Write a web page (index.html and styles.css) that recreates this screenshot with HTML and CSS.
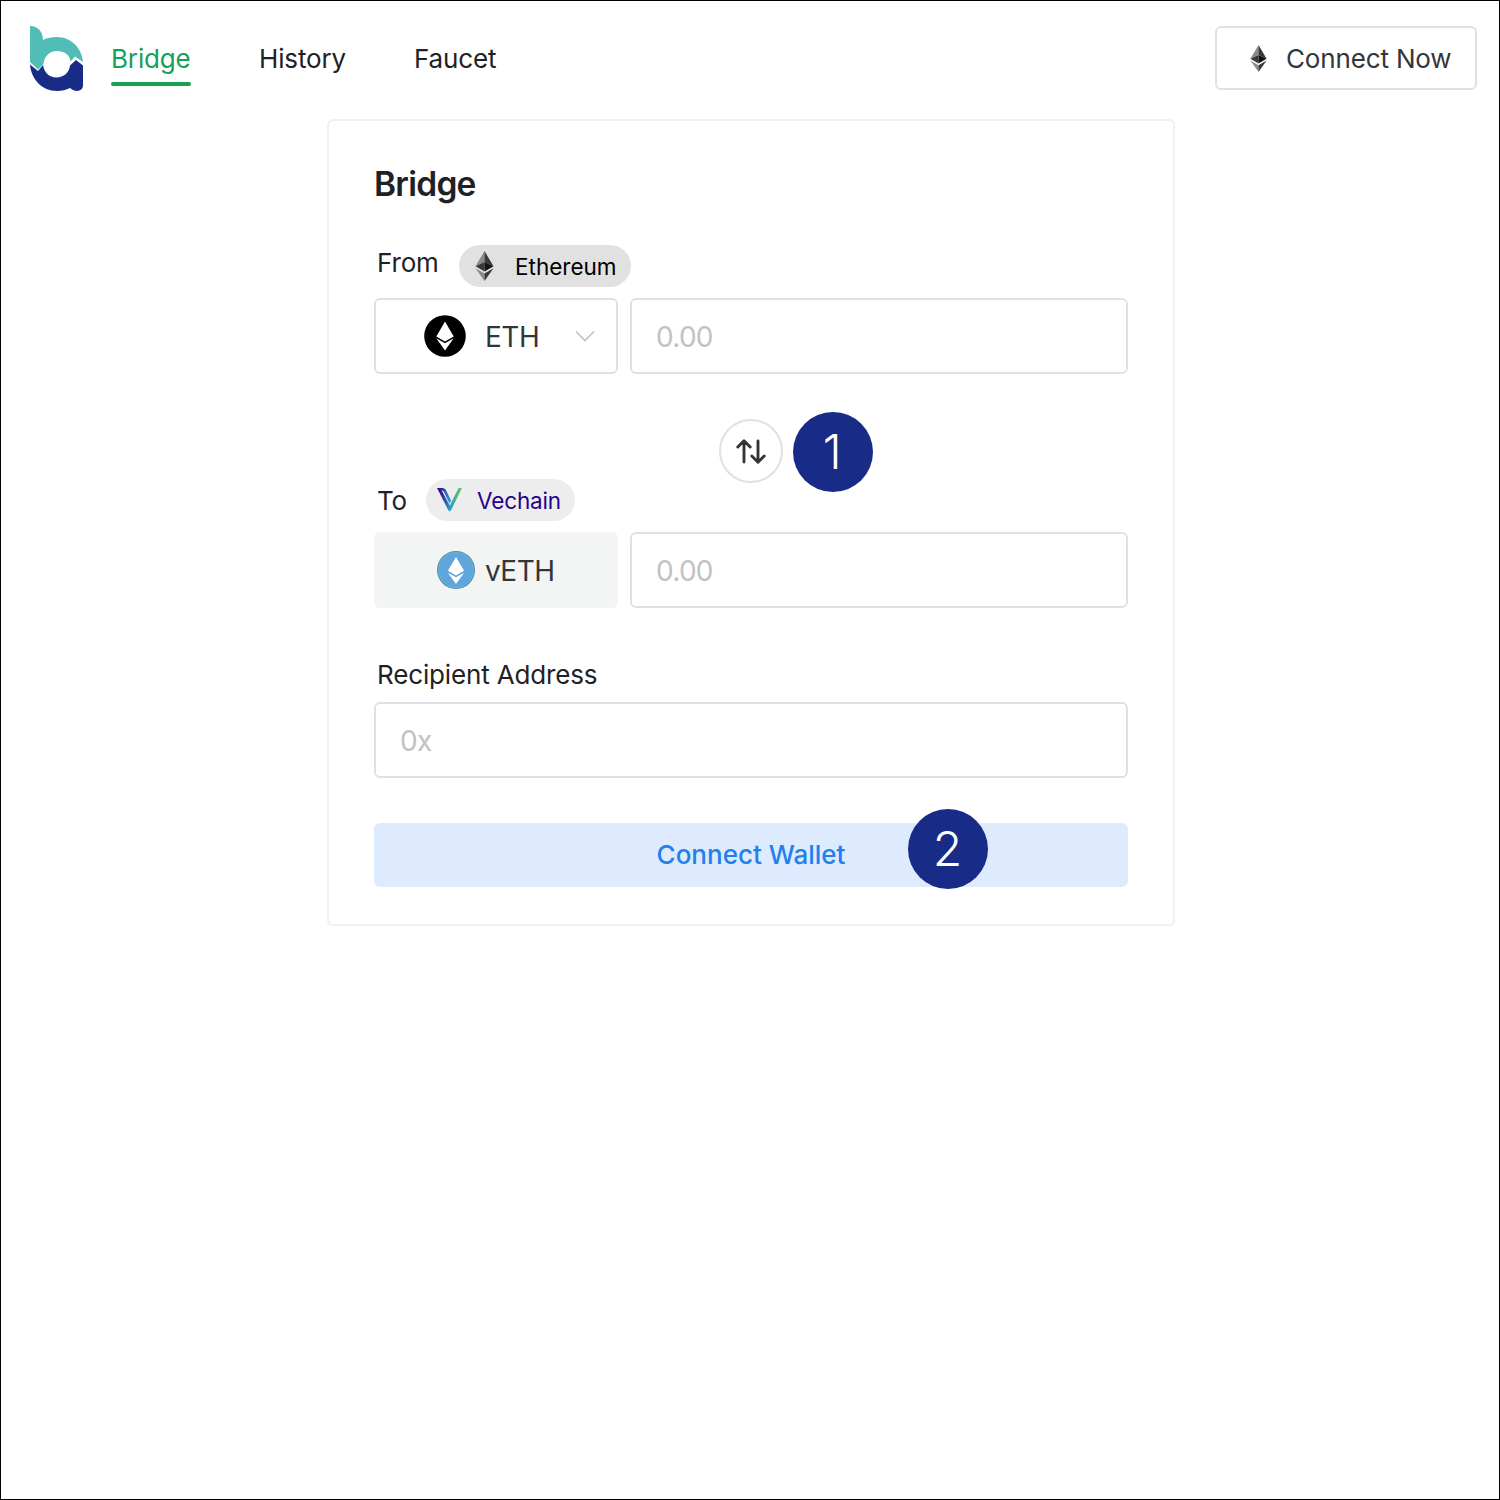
FILE: index.html
```html
<!DOCTYPE html>
<html lang="en">
<head>
<meta charset="utf-8">
<title>Bridge</title>
<link rel="stylesheet" href="styles.css">
</head>
<body>
<svg class="defs" width="0" height="0" aria-hidden="true">
  <defs>
    <linearGradient id="ve" x1="0" y1="0" x2="1" y2="0"><stop offset="0" stop-color="#2a0d94"/><stop offset=".22" stop-color="#2d2a9c"/><stop offset=".5" stop-color="#2a9bd0"/><stop offset="1" stop-color="#70c94f"/></linearGradient>
    <symbol id="eth" viewBox="0 0 18 30">
      <path fill="#8b8b8b" d="M9 0 0 15.2 9 11z"/><path fill="#393939" d="M9 0v11l9 4.2z"/>
      <path fill="#393939" d="M0 15.2 9 11v9.5z"/><path fill="#131313" d="M9 11v9.5l9-5.3z"/>
      <path fill="#8b8b8b" d="M0 17.2 9 30v-7.5z"/><path fill="#393939" d="M9 22.5V30l9-12.8z"/>
    </symbol>
    <symbol id="gem" viewBox="0 0 18 30">
      <path d="M9 0 0 15.4 9 20.6l9-5.2zM0 17.4 9 30l9-12.6-9 5.2z"/>
    </symbol>
  </defs>
</svg>
<header class="topbar">
  <svg class="logo" viewBox="0 0 54 65" width="54" height="65">
    <path fill="#52bcb7" d="M0 0C8 0 13 6 13 14c4-2.200 9-3 14-3 14 0 25 11 26 25l-8-5.500-4.500 5C40 29 34 25 27 25c-8 0-13 6-13.500 13L8 43.500 0 36z"/>
    <path fill="#182c87" d="M0 38.500 8 45l5-6c1 7 6 12.500 13.500 12.500 7 0 13-5 13.500-12l6-5.500 7 5.500V59c0 7-8 7.500-13 3-4 2-8 3-13 3C12 65 1 53 0 38.500z"/>
  </svg>
  <nav class="nav">
    <a class="nav-link active">Bridge</a>
    <a class="nav-link">History</a>
    <a class="nav-link">Faucet</a>
  </nav>
  <button class="connect-now"><svg width="17" height="27"><use href="#eth"/></svg><span>Connect Now</span></button>
</header>
<main class="card">
  <h1 class="title">Bridge</h1>
  <div class="label-row">
    <span class="label from">From</span>
    <span class="pill ethereum"><svg width="19" height="30"><use href="#eth"/></svg><span class="chain">Ethereum</span></span>
  </div>
  <div class="field-row">
    <div class="token select">
      <svg class="coin" width="42" height="42"><circle cx="21" cy="21" r="20.800"/><use href="#gem" x="12" y="6.500" width="18" height="29" fill="#fff"/></svg>
      <span class="token-name">ETH</span>
      <svg class="chevron" width="20" height="12" viewBox="0 0 20 12"><path d="m1 1.500 9 9 9-9" fill="none" stroke="#c2c2c2" stroke-width="1.600"/></svg>
    </div>
    <input class="field" placeholder="0.00">
  </div>
  <div class="switch-row">
    <button class="switch"><svg width="30" height="25" viewBox="0 0 30 25"><path d="M8 23V2M1.800 8 8 1.800 14.200 8M22 2v21M15.800 17 22 23.200 28.200 17" fill="none" stroke="#333639" stroke-width="2.900" stroke-linecap="round" stroke-linejoin="round"/></svg></button>
    <span class="badge badge-one">1</span>
  </div>
  <div class="label-row to-row">
    <span class="label to">To</span>
    <span class="pill vechain"><svg width="26" height="24" viewBox="0 0 26 24"><path fill="url(#ve)" d="M0 0h5c2 0 3.200.7 4 2.300l5.200 10.200-1.600 3.300L7.200 4.300C6.500 2.900 6 2.400 4.600 2.200L12.800 17.600 21.500 0H25L14 22.300c-.7 1.300-1.900 1.300-2.600 0z"/></svg><span class="chain">Vechain</span></span>
  </div>
  <div class="field-row">
    <div class="token fixed">
      <svg class="coin" width="38" height="38"><circle cx="19" cy="19" r="19" fill="#5488ac"/><circle cx="19" cy="19" r="18" fill="#61b8d4"/><circle cx="19" cy="19" r="16.800" fill="#5fa4dc"/><use href="#gem" x="10.750" y="6" width="16.500" height="27" fill="#fff"/></svg>
      <span class="token-name">vETH</span>
    </div>
    <input class="field" placeholder="0.00">
  </div>
  <label class="label recipient">Recipient Address</label>
  <input class="field address" placeholder="0x">
  <button class="connect-wallet"><span>Connect Wallet</span><span class="badge badge-two">2</span></button>
</main>
</body>
</html>
```

FILE: styles.css
```css
* { box-sizing: border-box; }
body { margin: 0; width: 1500px; height: 1500px; border: 1px solid #000; background: #fff; color: #1f2225; font: 26px/36px Inter, "Liberation Sans", sans-serif; letter-spacing: -.15px; overflow: hidden; }
button, input { font: inherit; letter-spacing: inherit; margin: 0; }
svg { display: block; flex: none; }
.defs { position: absolute; }
.topbar { height: 118px; padding: 25px 22px 0 29px; display: flex; align-items: flex-start; }
.nav { display: flex; margin-left: 27px; padding-top: 15px; gap: 68px; }
.nav-link { height: 45px; white-space: nowrap; }
.active { width: 80px; color: #18a058; }
.active::after { content: ""; display: block; height: 4px; border-radius: 2px; background: #18a058; margin-top: 5px; }
.connect-now { margin-left: auto; width: 262px; height: 64px; border: 2px solid #e0e0e6; border-radius: 6px; background: #fff; color: #333639; display: flex; align-items: center; padding: 1px 0 0 33px; gap: 19px; white-space: nowrap; }
.card { width: 848px; height: 807px; margin-left: 326px; border: 2px solid #efeff5; border-radius: 6px; padding: 42px 45px 0; }
.title { margin: 0; font-size: 33.5px; line-height: 42px; font-weight: 600; letter-spacing: -.75px; }
.label-row { display: flex; align-items: flex-start; margin-top: 40px; height: 53px; padding-left: 3px; }
.label { white-space: nowrap; }
.from { width: 62px; }
.to { width: 30px; padding-top: 4px; }
.pill { height: 42px; border-radius: 21px; display: flex; align-items: center; font-size: 22.5px; white-space: nowrap; }
.chain { padding-top: 2px; }
.ethereum { width: 172px; margin-left: 20px; background: #e1e1e1; color: #000; padding-left: 16px; gap: 21px; letter-spacing: 0; }
.vechain { width: 149px; margin-left: 19px; background: #ededed; color: #28008c; padding-left: 11px; gap: 14px; }
.field-row { display: flex; gap: 12px; height: 76px; }
.token { width: 244px; height: 76px; border-radius: 6px; display: flex; align-items: center; color: #333639; font-size: 28px; letter-spacing: -.5px; }
.token-name { padding-top: 1px; }
.select { border: 2px solid #e0e0e6; padding-left: 48px; }
.select .token-name { margin-left: 19px; width: 54px; }
.chevron { margin-left: 36px; }
.fixed { background: #f3f5f5; padding-left: 63px; gap: 10px; }
.field { width: 498px; height: 76px; border: 2px solid #e0e0e6; border-radius: 6px; background: #fff; padding: 1px 24px 0; font-size: 28px; letter-spacing: -.7px; outline: 0; }
.field::placeholder { color: #c2c2c2; opacity: 1; }
.switch-row { height: 105px; padding-top: 45px; display: flex; justify-content: center; position: relative; }
.switch { width: 64px; height: 64px; flex: none; padding: 0; border: 2px solid #e0e0e6; border-radius: 50%; background: #fff; display: flex; align-items: center; justify-content: center; }
.badge { position: absolute; width: 80px; height: 80px; border-radius: 50%; background: #182c87; color: #fff; display: flex; align-items: center; justify-content: center; font: 300 48px/80px Inter, sans-serif; }
.badge-one { left: 419px; top: 38px; padding-right: 2px; }
.to-row { margin-top: 0; }
.recipient { display: block; margin: 49px 0 9px 3px; }
.address { display: block; width: 754px; }
.connect-wallet { display: flex; justify-content: center; align-items: center; position: relative; width: 754px; height: 64px; margin-top: 45px; border: 0; border-radius: 6px; background: #deeafe; color: #2080f0; font-weight: 500; padding: 0; letter-spacing: 0; }
.badge-two { left: 534px; top: -14px; padding-right: 1px; }
```
